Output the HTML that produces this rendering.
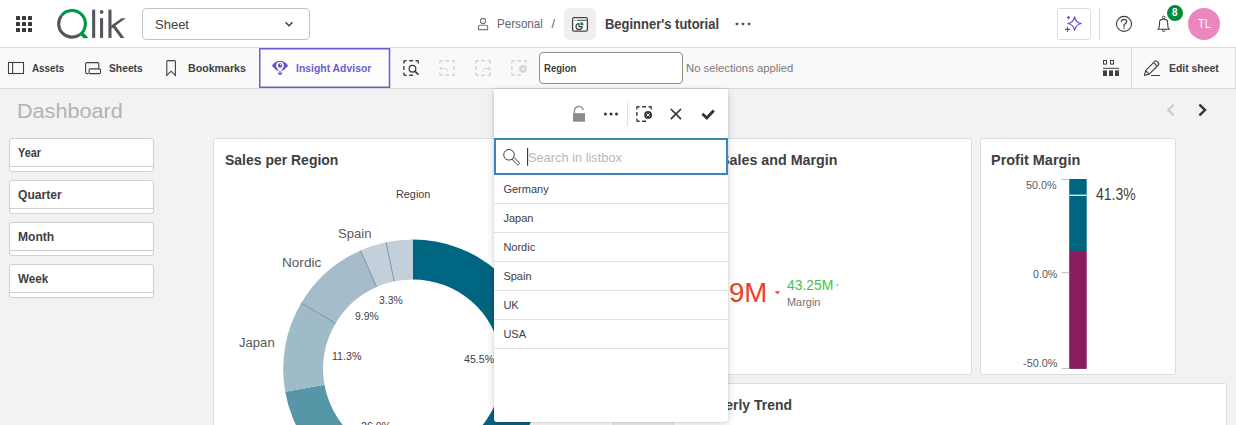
<!DOCTYPE html>
<html><head><meta charset="utf-8"><style>
html,body{margin:0;padding:0;width:1236px;height:425px;overflow:hidden;background:#f2f2f2;font-family:"Liberation Sans",sans-serif}
.t{position:absolute;white-space:pre;line-height:1;font-family:"Liberation Sans",sans-serif;transform-origin:0 0}
</style></head><body>
<div style="position:absolute;left:0px;top:0px;width:1236px;height:47px;background:#fff"></div>
<div style="position:absolute;left:0px;top:47px;width:1236px;height:1px;background:#d9d9d9"></div>
<div style="position:absolute;left:0px;top:48px;width:1236px;height:40px;background:#f9f9f9"></div>
<div style="position:absolute;left:0px;top:88px;width:1236px;height:1px;background:#d9d9d9"></div>
<svg style="position:absolute;left:0px;top:0px" width="1236" height="425" viewBox="0 0 1236 425"><rect x="16" y="16" width="4" height="4" rx="0.6" fill="#3a3a3a"/><rect x="22" y="16" width="4" height="4" rx="0.6" fill="#3a3a3a"/><rect x="28" y="16" width="4" height="4" rx="0.6" fill="#3a3a3a"/><rect x="16" y="22" width="4" height="4" rx="0.6" fill="#3a3a3a"/><rect x="22" y="22" width="4" height="4" rx="0.6" fill="#3a3a3a"/><rect x="28" y="22" width="4" height="4" rx="0.6" fill="#3a3a3a"/><rect x="16" y="28" width="4" height="4" rx="0.6" fill="#3a3a3a"/><rect x="22" y="28" width="4" height="4" rx="0.6" fill="#3a3a3a"/><rect x="28" y="28" width="4" height="4" rx="0.6" fill="#3a3a3a"/></svg>
<svg style="position:absolute;left:0px;top:0px" width="1236" height="425" viewBox="0 0 1236 425"><path d="M80.03 34.46 A13.35 13.35 0 0 1 61.48 15.58" fill="none" stroke="#54565b" stroke-width="3.1"/><path d="M61.48 15.58 A13.35 13.35 0 1 1 80.03 34.46" fill="none" stroke="#009845" stroke-width="3.1"/><path d="M79.6 33.9 L83.4 32.6 L88 37.5 L87.5 38.3 L83.6 38.3 Z" fill="#009845"/><rect x="92.1" y="9.7" width="3.1" height="28.2" fill="#54565b"/><circle cx="101.6" cy="11.9" r="1.9" fill="#54565b"/><rect x="100" y="18.2" width="3.1" height="19.7" fill="#54565b"/><rect x="108.4" y="9.7" width="3.1" height="28.2" fill="#54565b"/><path d="M111.2 25.6 L121.6 18.2 L125.8 18.2 L111.2 28.8 Z" fill="#54565b"/><path d="M114.2 24 L124.4 37.9 L120.6 37.9 L111.8 26 Z" fill="#54565b"/></svg>
<div style="position:absolute;left:142px;top:8px;width:168px;height:32px;border:1px solid #c4c4c4;border-radius:4px;box-sizing:border-box"></div>
<div class="t" style="left:155.00px;top:18.09px;font-size:13px;font-weight:400;color:#404040;">Sheet</div>
<svg style="position:absolute;left:0px;top:0px" width="1236" height="425" viewBox="0 0 1236 425"><path d="M285.5 22.3 L289 25.8 L292.5 22.3" fill="none" stroke="#404040" stroke-width="1.5"/></svg>
<svg style="position:absolute;left:0px;top:0px" width="1236" height="425" viewBox="0 0 1236 425"><circle cx="483" cy="21" r="2.6" fill="none" stroke="#757575" stroke-width="1.1"/><path d="M478.4 29.6 L478.4 26.6 Q478.4 25.2 480 25.2 L486 25.2 Q487.6 25.2 487.6 26.6 L487.6 29.6 Z" fill="none" stroke="#757575" stroke-width="1.1"/></svg>
<div class="t" style="left:497.00px;top:17.92px;font-size:12.5px;font-weight:400;color:#666666;transform:scaleX(0.93);">Personal</div>
<div class="t" style="left:551.50px;top:17.49px;font-size:13px;font-weight:400;color:#666666;">/</div>
<div style="position:absolute;left:564px;top:8px;width:32px;height:32px;background:#efefef;border-radius:5px"></div>
<svg style="position:absolute;left:0px;top:0px" width="1236" height="425" viewBox="0 0 1236 425"><rect x="572.6" y="17.6" width="14.8" height="13.6" rx="1.6" fill="#fff" stroke="#404040" stroke-width="1.3"/><line x1="574.5" y1="20.3" x2="575.5" y2="20.3" stroke="#404040" stroke-width="1"/><line x1="577" y1="20.3" x2="586.5" y2="20.3" stroke="#404040" stroke-width="1"/><path d="M579 23.6 A3 3 0 1 0 582 26.6 L579 26.6 Z" fill="none" stroke="#404040" stroke-width="1.2"/><path d="M580.4 22 L580.4 25.2 L583.6 25.2 A3.2 3.2 0 0 0 580.4 22 Z" fill="#009845"/></svg>
<div class="t" style="left:604.60px;top:17.02px;font-size:14.5px;font-weight:700;color:#404040;transform:scaleX(0.894);">Beginner&#39;s tutorial</div>
<svg style="position:absolute;left:0px;top:0px" width="1236" height="425" viewBox="0 0 1236 425"><rect x="735.7" y="22.7" width="2.5" height="2.5" rx="0.6" fill="#555"/><rect x="741.7" y="22.7" width="2.5" height="2.5" rx="0.6" fill="#555"/><rect x="747.7" y="22.7" width="2.5" height="2.5" rx="0.6" fill="#555"/></svg>
<div style="position:absolute;left:1057px;top:8px;width:34px;height:32px;border:1px solid #dcdcdc;border-radius:2.5px;box-sizing:border-box"></div>
<svg style="position:absolute;left:0px;top:0px" width="1236" height="425" viewBox="0 0 1236 425"><path d="M1074.6 16.8 Q1075.6 22.4 1081.2 23.5 Q1075.6 24.6 1074.6 30.2 Q1073.6 24.6 1068 23.5 Q1073.6 22.4 1074.6 16.8 Z" fill="none" stroke="#5b4fc8" stroke-width="1.2" stroke-linejoin="round"/><path d="M1068.5 15.8 L1070.2 17.6 L1068.5 19.4 L1066.8 17.6 Z" fill="#5b4fc8"/><path d="M1067.5 26.8 V32 M1064.9 29.4 H1070.1" stroke="#5b4fc8" stroke-width="1.2"/></svg>
<div style="position:absolute;left:1099px;top:8px;width:1px;height:32px;background:#d9d9d9"></div>
<svg style="position:absolute;left:0px;top:0px" width="1236" height="425" viewBox="0 0 1236 425"><circle cx="1124" cy="23.9" r="7.5" fill="none" stroke="#404040" stroke-width="1.1"/><path d="M1121.4 21.4 Q1121.6 19.3 1124 19.3 Q1126.7 19.3 1126.7 21.5 Q1126.7 23 1125 23.9 Q1124 24.4 1124 25.6 L1124 26.4" fill="none" stroke="#404040" stroke-width="1.2" stroke-linecap="round"/><circle cx="1124" cy="28.3" r="0.75" fill="#404040"/></svg>
<svg style="position:absolute;left:0px;top:0px" width="1236" height="425" viewBox="0 0 1236 425"><path d="M1157.3 29.2 L1170 29.2 M1158.6 28.9 Q1159.4 27.6 1159.5 24 L1159.6 21.8 Q1159.9 19.1 1163.6 19.1 Q1167.3 19.1 1167.6 21.8 L1167.7 24 Q1167.8 27.6 1168.6 28.9" fill="none" stroke="#404040" stroke-width="1.1" stroke-linejoin="round"/><circle cx="1163.6" cy="17.4" r="1.2" fill="#fff" stroke="#404040" stroke-width="1"/><circle cx="1163.6" cy="30.4" r="1.2" fill="#fff" stroke="#404040" stroke-width="1"/></svg>
<svg style="position:absolute;left:0px;top:0px" width="1236" height="425" viewBox="0 0 1236 425"><circle cx="1175" cy="13.1" r="8" fill="#008a3e"/><circle cx="1204" cy="23.9" r="16" fill="#ea88be"/></svg>
<div class="t" style="left:1172.10px;top:8.23px;font-size:10px;font-weight:700;color:#ffffff;">8</div>
<div class="t" style="left:1197.80px;top:17.57px;font-size:12.2px;font-weight:400;color:#ffffff;transform:scaleX(0.91);">TL</div>
<svg style="position:absolute;left:0px;top:0px" width="1236" height="425" viewBox="0 0 1236 425"><rect x="8.5" y="62.5" width="15" height="11" fill="none" stroke="#404040" stroke-width="1.1"/><line x1="12.6" y1="62.5" x2="12.6" y2="73.5" stroke="#404040" stroke-width="1.1"/></svg>
<div class="t" style="left:32.00px;top:63.42px;font-size:11.2px;font-weight:700;color:#404040;transform:scaleX(0.88);">Assets</div>
<svg style="position:absolute;left:0px;top:0px" width="1236" height="425" viewBox="0 0 1236 425"><path d="M88.4 73.6 L87 73.6 Q85.6 73.6 85.6 72.2 L85.6 64 Q85.6 62.6 87 62.6 L97.6 62.6 Q98.8 62.6 98.8 64 L98.8 68.8" fill="none" stroke="#404040" stroke-width="1.1"/><rect x="89.1" y="68.9" width="11.4" height="4.7" rx="1.1" fill="none" stroke="#404040" stroke-width="1.1"/></svg>
<div class="t" style="left:108.70px;top:63.42px;font-size:11.2px;font-weight:700;color:#404040;transform:scaleX(0.92);">Sheets</div>
<svg style="position:absolute;left:0px;top:0px" width="1236" height="425" viewBox="0 0 1236 425"><path d="M166.8 75.4 L166.8 61.6 Q166.8 60.6 167.8 60.6 L174.4 60.6 Q175.4 60.6 175.4 61.6 L175.4 75.4 L171.1 71.2 Z" fill="none" stroke="#404040" stroke-width="1.1" stroke-linejoin="miter"/></svg>
<div class="t" style="left:187.70px;top:63.42px;font-size:11.2px;font-weight:700;color:#404040;transform:scaleX(0.95);">Bookmarks</div>
<svg style="position:absolute;left:0px;top:0px" width="1236" height="425" viewBox="0 0 1236 425"><rect x="259.75" y="48.75" width="129.75" height="38.5" fill="#fdfdfd" stroke="#6a5fd0" stroke-width="1.5"/></svg>
<svg style="position:absolute;left:0px;top:0px" width="1236" height="425" viewBox="0 0 1236 425"><path d="M271.9 65.8 Q275.5 60.8 280 60.8 Q284.5 60.8 288.1 65.8 Q284.6 70 281.2 71.6 L278.8 71.6 Q275.4 70 271.9 65.8 Z" fill="#5f52c6"/><circle cx="280" cy="65.6" r="3.8" fill="#fff"/><path d="M277.3 67.6 L282.7 67.6 L281.5 71 L278.5 71 Z" fill="#fff"/><circle cx="280.1" cy="65.5" r="2.2" fill="#5f52c6"/><circle cx="280.8" cy="64.8" r="0.7" fill="#fff"/><path d="M277.9 72.5 L282.3 72.5 Q282.1 74.9 280.1 74.9 Q278.1 74.9 277.9 72.5 Z" fill="#5f52c6"/></svg>
<div class="t" style="left:296.00px;top:62.72px;font-size:11.2px;font-weight:700;color:#6a5fcf;transform:scaleX(0.93);">Insight Advisor</div>
<svg style="position:absolute;left:0px;top:0px" width="1236" height="425" viewBox="0 0 1236 425"><path d="M403.875 63.475 V61.574999999999996 Q403.875 60.775 404.675 60.775 H406.575 M409.2 60.775 H413.0 M415.525 60.775 H417.42499999999995 Q418.22499999999997 60.775 418.22499999999997 61.574999999999996 V63.475 M403.875 66.0 V70.0 M403.875 72.525 V74.42500000000001 Q403.875 75.22500000000001 404.675 75.22500000000001 H406.575 M409.2 75.22500000000001 H413.0" fill="none" stroke="#404040" stroke-width="1.35"/><circle cx="412.5" cy="68.7" r="3.3" fill="none" stroke="#404040" stroke-width="1.3"/><line x1="415" y1="71.3" x2="418" y2="74.2" stroke="#404040" stroke-width="1.7" stroke-linecap="round"/><path d="M439.875 63.475 V61.574999999999996 Q439.875 60.775 440.675 60.775 H442.575 M445.2 60.775 H449.0 M451.525 60.775 H453.42499999999995 Q454.22499999999997 60.775 454.22499999999997 61.574999999999996 V63.475 M454.22499999999997 66.0 V70.0 M439.875 72.525 V74.42500000000001 Q439.875 75.22500000000001 440.675 75.22500000000001 H442.575 M445.2 75.22500000000001 H449.0 M451.525 75.22500000000001 H453.42499999999995 Q454.22499999999997 75.22500000000001 454.22499999999997 74.42500000000001 V72.525" fill="none" stroke="#d4d4d4" stroke-width="1.35"/><path d="M441.8 66.4 L439.6 68.5 L441.8 70.6 M439.6 68.5 L445 68.5 Q447.4 68.7 447.6 71.6" fill="none" stroke="#d4d4d4" stroke-width="1"/><path d="M475.875 63.475 V61.574999999999996 Q475.875 60.775 476.675 60.775 H478.575 M481.2 60.775 H485.0 M487.525 60.775 H489.42499999999995 Q490.22499999999997 60.775 490.22499999999997 61.574999999999996 V63.475 M475.875 66.0 V70.0 M475.875 72.525 V74.42500000000001 Q475.875 75.22500000000001 476.675 75.22500000000001 H478.575 M481.2 75.22500000000001 H485.0 M487.525 75.22500000000001 H489.42499999999995 Q490.22499999999997 75.22500000000001 490.22499999999997 74.42500000000001 V72.525" fill="none" stroke="#d4d4d4" stroke-width="1.35"/><path d="M488.4 66.4 L490.6 68.5 L488.4 70.6 M490.6 68.5 L485.2 68.5 Q482.8 68.7 482.6 71.6" fill="none" stroke="#d4d4d4" stroke-width="1"/><path d="M511.875 63.475 V61.574999999999996 Q511.875 60.775 512.675 60.775 H514.575 M517.2 60.775 H521.0 M523.525 60.775 H525.4250000000001 Q526.225 60.775 526.225 61.574999999999996 V63.475 M511.875 66.0 V70.0 M511.875 72.525 V74.42500000000001 Q511.875 75.22500000000001 512.675 75.22500000000001 H514.575 M517.2 75.22500000000001 H521.0" fill="none" stroke="#d4d4d4" stroke-width="1.35"/><circle cx="523" cy="68.8" r="3.9" fill="#d4d4d4"/><path d="M521.3 67.1 L524.7 70.5 M524.7 67.1 L521.3 70.5" stroke="#f9f9f9" stroke-width="1"/></svg>
<div style="position:absolute;left:539px;top:52px;width:144px;height:32px;border:1px solid #8f8f8f;border-radius:4px;box-sizing:border-box;background:#fff"></div>
<div class="t" style="left:544.30px;top:62.59px;font-size:11px;font-weight:700;color:#404040;transform:scaleX(0.87);">Region</div>
<div class="t" style="left:686.00px;top:62.76px;font-size:11.5px;font-weight:400;color:#7a7a7a;transform:scaleX(0.982);">No selections applied</div>
<svg style="position:absolute;left:0px;top:0px" width="1236" height="425" viewBox="0 0 1236 425"><rect x="1103.5" y="60.5" width="3" height="3.6" fill="none" stroke="#404040" stroke-width="1"/><rect x="1110.5" y="60.5" width="3" height="3.6" fill="none" stroke="#404040" stroke-width="1"/><rect x="1103" y="67.8" width="16" height="1" fill="#404040"/><rect x="1103" y="70.4" width="4" height="5.6" fill="#404040"/><rect x="1109" y="70.4" width="4" height="5.6" fill="#404040"/><rect x="1115" y="70.4" width="4" height="5.6" fill="#404040"/></svg>
<div style="position:absolute;left:1131px;top:48px;width:1px;height:40px;background:#d9d9d9"></div>
<svg style="position:absolute;left:0px;top:0px" width="1236" height="425" viewBox="0 0 1236 425"><path d="M1144.4 75.4 L1145.6 70.6 L1154.8 61.4 Q1155.8 60.4 1156.8 61.4 L1158.4 63 Q1159.4 64 1158.4 65 L1149.2 74.2 Z M1153.6 62.6 L1157.2 66.2 M1145.6 70.6 L1149.2 74.2" fill="none" stroke="#404040" stroke-width="1.1" stroke-linejoin="round"/><line x1="1151" y1="75.5" x2="1160" y2="75.5" stroke="#404040" stroke-width="1"/></svg>
<div class="t" style="left:1168.50px;top:63.22px;font-size:11.2px;font-weight:700;color:#404040;transform:scaleX(0.93);">Edit sheet</div>
<div style="position:absolute;left:1235px;top:48px;width:1px;height:40px;background:#d9d9d9"></div>
<div style="position:absolute;left:0px;top:89px;width:1236px;height:336px;background:#f2f2f2"></div>
<div class="t" style="left:16.90px;top:101.47px;font-size:20px;font-weight:400;color:#b3b3b3;transform:scaleX(1.08);">Dashboard</div>
<svg style="position:absolute;left:0px;top:0px" width="1236" height="425" viewBox="0 0 1236 425"><path d="M1173.8 104.6 L1168.2 110 L1173.8 115.4" fill="none" stroke="#c8c8c8" stroke-width="2"/><path d="M1199.4 104.6 L1205 110 L1199.4 115.4" fill="none" stroke="#333" stroke-width="2.4"/></svg>
<div style="position:absolute;left:9px;top:138px;width:145px;height:34px;background:#fff;border:1px solid #cfcfcf;border-radius:3px;box-sizing:border-box"></div>
<div style="position:absolute;left:9px;top:166px;width:145px;height:1px;background:#cfcfcf"></div>
<div class="t" style="left:18.40px;top:146.84px;font-size:12px;font-weight:700;color:#404040;transform:scaleX(0.905);">Year</div>
<div style="position:absolute;left:9px;top:180px;width:145px;height:34px;background:#fff;border:1px solid #cfcfcf;border-radius:3px;box-sizing:border-box"></div>
<div style="position:absolute;left:9px;top:208px;width:145px;height:1px;background:#cfcfcf"></div>
<div class="t" style="left:18.40px;top:188.84px;font-size:12px;font-weight:700;color:#404040;transform:scaleX(1.008);">Quarter</div>
<div style="position:absolute;left:9px;top:222px;width:145px;height:34px;background:#fff;border:1px solid #cfcfcf;border-radius:3px;box-sizing:border-box"></div>
<div style="position:absolute;left:9px;top:250px;width:145px;height:1px;background:#cfcfcf"></div>
<div class="t" style="left:18.40px;top:230.84px;font-size:12px;font-weight:700;color:#404040;transform:scaleX(1.006);">Month</div>
<div style="position:absolute;left:9px;top:264px;width:145px;height:34px;background:#fff;border:1px solid #cfcfcf;border-radius:3px;box-sizing:border-box"></div>
<div style="position:absolute;left:9px;top:292px;width:145px;height:1px;background:#cfcfcf"></div>
<div class="t" style="left:18.40px;top:272.84px;font-size:12px;font-weight:700;color:#404040;transform:scaleX(0.972);">Week</div>
<div style="position:absolute;left:213px;top:138px;width:401px;height:300px;background:#fff;border:1px solid #dcdcdc;border-radius:2.5px;box-sizing:border-box"></div>
<div style="position:absolute;left:673px;top:138px;width:299px;height:237px;background:#fff;border:1px solid #dcdcdc;border-radius:2.5px;box-sizing:border-box"></div>
<div style="position:absolute;left:980px;top:138px;width:196px;height:237px;background:#fff;border:1px solid #dcdcdc;border-radius:2.5px;box-sizing:border-box"></div>
<div style="position:absolute;left:673px;top:383px;width:554px;height:60px;background:#fff;border:1px solid #dcdcdc;border-radius:2.5px;box-sizing:border-box"></div>
<div class="t" style="left:225.00px;top:152.58px;font-size:14.2px;font-weight:700;color:#404040;transform:scaleX(0.985);">Sales per Region</div>
<div class="t" style="left:683.30px;top:152.78px;font-size:14.2px;font-weight:700;color:#404040;transform:scaleX(1.007);">Total Sales and Margin</div>
<div class="t" style="left:991.00px;top:153.18px;font-size:14.2px;font-weight:700;color:#404040;transform:scaleX(1.02);">Profit Margin</div>
<div class="t" style="left:688.00px;top:397.68px;font-size:14.2px;font-weight:700;color:#404040;transform:scaleX(0.985);">Quarterly Trend</div>
<svg style="position:absolute;left:0px;top:0px" width="1236" height="425" viewBox="0 0 1236 425"><path d="M412.70 239.50 A129.5 129.5 0 0 1 448.83 493.36 L437.70 455.04 A89.6 89.6 0 0 0 412.70 279.40 Z" fill="#006580"/><path d="M448.83 493.36 A129.5 129.5 0 0 1 285.20 391.67 L324.48 384.68 A89.6 89.6 0 0 0 437.70 455.04 Z" fill="#5796a6"/><path d="M285.20 391.67 A129.5 129.5 0 0 1 301.23 303.08 L335.58 323.39 A89.6 89.6 0 0 0 324.48 384.68 Z" fill="#9fbbc8"/><path d="M301.23 303.08 A129.5 129.5 0 0 1 360.52 250.48 L376.60 286.99 A89.6 89.6 0 0 0 335.58 323.39 Z" fill="#a5bdca"/><path d="M360.52 250.48 A129.5 129.5 0 0 1 386.04 242.27 L394.25 281.32 A89.6 89.6 0 0 0 376.60 286.99 Z" fill="#c3cfda"/><path d="M386.04 242.27 A129.5 129.5 0 0 1 412.70 239.50 L412.70 279.40 A89.6 89.6 0 0 0 394.25 281.32 Z" fill="#c3cfda"/><line x1="301.23" y1="303.08" x2="335.58" y2="323.39" stroke="#7a8a93" stroke-width="0.9"/><line x1="360.52" y1="250.48" x2="376.60" y2="286.99" stroke="#7a8a93" stroke-width="0.9"/><line x1="386.04" y1="242.27" x2="394.25" y2="281.32" stroke="#7a8a93" stroke-width="0.9"/></svg>
<div class="t" style="left:396.40px;top:188.51px;font-size:11.8px;font-weight:400;color:#404040;transform:scaleX(0.92);">Region</div>
<div class="t" style="left:337.60px;top:227.53px;font-size:12.6px;font-weight:400;color:#595959;transform:scaleX(1.038);">Spain</div>
<div class="t" style="left:281.60px;top:256.93px;font-size:12.6px;font-weight:400;color:#595959;transform:scaleX(1.078);">Nordic</div>
<div class="t" style="left:238.60px;top:337.33px;font-size:12.6px;font-weight:400;color:#595959;transform:scaleX(1.04);">Japan</div>
<div class="t" style="left:378.70px;top:294.62px;font-size:11.2px;font-weight:400;color:#404040;transform:scaleX(0.93);">3.3%</div>
<div class="t" style="left:354.50px;top:310.52px;font-size:11.2px;font-weight:400;color:#404040;transform:scaleX(0.93);">9.9%</div>
<div class="t" style="left:331.60px;top:350.72px;font-size:11.2px;font-weight:400;color:#404040;transform:scaleX(0.95);">11.3%</div>
<div class="t" style="left:464.00px;top:354.12px;font-size:11.2px;font-weight:400;color:#404040;transform:scaleX(0.95);">45.5%</div>
<div class="t" style="left:361.00px;top:420.52px;font-size:11.2px;font-weight:400;color:#404040;transform:scaleX(0.95);">26.0%</div>
<div class="t" style="left:729.30px;top:278.90px;font-size:28px;font-weight:400;color:#f0401e;transform:scaleX(0.985);">9M</div>
<svg style="position:absolute;left:0px;top:0px" width="1236" height="425" viewBox="0 0 1236 425"><path d="M774.6 291.2 L780.2 291.2 L777.4 294.2 Z" fill="#f0401e"/><path d="M836.2 285.4 L838.8 285.4 L837.5 283.8 Z" fill="#4cc14c"/></svg>
<div class="t" style="left:787.00px;top:278.15px;font-size:14px;font-weight:400;color:#45c245;transform:scaleX(0.99);">43.25M</div>
<div class="t" style="left:787.00px;top:296.51px;font-size:10.5px;font-weight:400;color:#737373;transform:scaleX(1.04);">Margin</div>
<svg style="position:absolute;left:0px;top:0px" width="1236" height="425" viewBox="0 0 1236 425"><rect x="1069.2" y="179" width="17.5" height="72" fill="#006580"/><rect x="1069.2" y="250.9" width="17.5" height="118" fill="#8a1d5e"/><rect x="1069.2" y="194.6" width="17.5" height="1.4" fill="#e6e6e6"/><line x1="1061.6" y1="179.5" x2="1069.2" y2="179.5" stroke="#bbb" stroke-width="1"/><line x1="1061.6" y1="272.7" x2="1069.2" y2="272.7" stroke="#bbb" stroke-width="1"/><line x1="1061.6" y1="368.4" x2="1069.2" y2="368.4" stroke="#bbb" stroke-width="1"/></svg>
<div class="t" style="left:1026.40px;top:179.69px;font-size:11px;font-weight:400;color:#595959;transform:scaleX(0.98);">50.0%</div>
<div class="t" style="left:1032.70px;top:268.69px;font-size:11px;font-weight:400;color:#595959;transform:scaleX(0.97);">0.0%</div>
<div class="t" style="left:1022.60px;top:357.89px;font-size:11px;font-weight:400;color:#595959;transform:scaleX(0.99);">-50.0%</div>
<div class="t" style="left:1095.90px;top:186.65px;font-size:16px;font-weight:400;color:#404040;transform:scaleX(0.875);">41.3%</div>
<div style="position:absolute;left:494px;top:89px;width:234px;height:333px;background:#fff;border-radius:0 0 3px 3px;box-shadow:0 0 1.5px rgba(0,0,0,0.22),0 2px 9px rgba(0,0,0,0.16)"></div>
<svg style="position:absolute;left:0px;top:0px" width="1236" height="425" viewBox="0 0 1236 425"><path d="M573 113.2 H585 V121.7 H573 Z" fill="#8c8c8c"/><path d="M574.4 113.2 V111.6 A4.4 4.4 0 0 1 583.3 110.2" fill="none" stroke="#8c8c8c" stroke-width="1.4"/><circle cx="605.4" cy="114" r="1.5" fill="#333"/><circle cx="611" cy="114" r="1.5" fill="#333"/><circle cx="616.5" cy="114" r="1.5" fill="#333"/><line x1="627.5" y1="102.4" x2="627.5" y2="125.7" stroke="#e0e0e0" stroke-width="1"/></svg>
<svg style="position:absolute;left:0px;top:0px" width="1236" height="425" viewBox="0 0 1236 425"><path d="M636.85 109.45 V107.55 Q636.85 106.75 637.65 106.75 H639.5500000000001 M642.2 106.75 H646.0 M648.5500000000001 106.75 H650.4500000000002 Q651.2500000000001 106.75 651.2500000000001 107.55 V109.45 M636.85 112.0 V116.0 M636.85 118.54999999999998 V120.44999999999999 Q636.85 121.24999999999999 637.65 121.24999999999999 H639.5500000000001 M642.2 121.24999999999999 H646.0" fill="none" stroke="#333" stroke-width="1.3"/><circle cx="648.1" cy="114.9" r="3.9" fill="#333"/><path d="M646.5 113.3 L649.7 116.5 M649.7 113.3 L646.5 116.5" stroke="#fff" stroke-width="1"/><path d="M670.8 109 L681 119.2 M681 109 L670.8 119.2" stroke="#333" stroke-width="1.7"/><path d="M702.4 113.8 L706.8 118 L713.8 110.6" fill="none" stroke="#333" stroke-width="2.9"/></svg>
<div style="position:absolute;left:494px;top:138px;width:234px;height:37px;border:2px solid #3a86b4;box-sizing:border-box"></div>
<svg style="position:absolute;left:0px;top:0px" width="1236" height="425" viewBox="0 0 1236 425"><circle cx="509" cy="154.8" r="5.3" fill="none" stroke="#404040" stroke-width="1"/><path d="M512.3 158.6 L513.9 157.3 L519.4 162.9 Q519.6 163.5 519.1 164 L518.2 164.7 Q517.6 165 517.2 164.6 L511.9 159.1 Z" fill="#fff" stroke="#404040" stroke-width="1"/><line x1="527.6" y1="148.1" x2="527.6" y2="165.7" stroke="#333" stroke-width="1.1"/></svg>
<div class="t" style="left:528.30px;top:151.19px;font-size:13px;font-weight:400;color:#b8b8b8;transform:scaleX(0.985);">Search in listbox</div>
<div style="position:absolute;left:494px;top:203px;width:234px;height:1px;background:#e0e0e0"></div>
<div class="t" style="left:503.40px;top:183.69px;font-size:11px;font-weight:400;color:#404040;">Germany</div>
<div style="position:absolute;left:494px;top:232px;width:234px;height:1px;background:#e0e0e0"></div>
<div class="t" style="left:503.40px;top:212.69px;font-size:11px;font-weight:400;color:#404040;">Japan</div>
<div style="position:absolute;left:494px;top:261px;width:234px;height:1px;background:#e0e0e0"></div>
<div class="t" style="left:503.40px;top:241.69px;font-size:11px;font-weight:400;color:#404040;">Nordic</div>
<div style="position:absolute;left:494px;top:290px;width:234px;height:1px;background:#e0e0e0"></div>
<div class="t" style="left:503.40px;top:270.69px;font-size:11px;font-weight:400;color:#404040;">Spain</div>
<div style="position:absolute;left:494px;top:319px;width:234px;height:1px;background:#e0e0e0"></div>
<div class="t" style="left:503.40px;top:299.69px;font-size:11px;font-weight:400;color:#404040;">UK</div>
<div style="position:absolute;left:494px;top:348px;width:234px;height:1px;background:#e0e0e0"></div>
<div class="t" style="left:503.40px;top:328.69px;font-size:11px;font-weight:400;color:#404040;">USA</div>
</body></html>
